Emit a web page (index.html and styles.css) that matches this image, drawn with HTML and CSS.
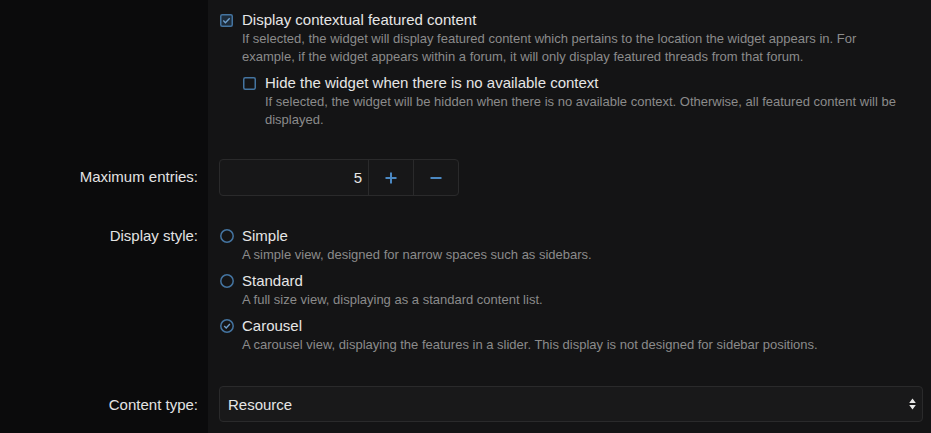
FILE: index.html
```html
<!DOCTYPE html>
<html lang="en">
<head>
  <meta charset="UTF-8" />
  <meta name="viewport" content="width=device-width, initial-scale=1.0" />
  <title>Widget options</title>
  <link rel="stylesheet" href="styles.css">
</head>
<body>
  <div class="form">
    <div class="row row-first">
      <div class="label"></div>
      <div class="field">
        <div class="choice">
          <svg class="box" width="13" height="13" viewBox="0 0 13 13">
            <rect x="0.75" y="0.75" width="11.5" height="11.5" rx="1.5" fill="#1d2c3b" stroke="#4474a0" stroke-width="1.5"/>
            <path d="M3.3 6.6 L5.4 8.7 L9.7 4.2" fill="none" stroke="#6f9fcc" stroke-width="1.4"/>
          </svg>
          <div class="choice-text">
            <div class="choice-title">Display contextual featured content</div>
            <div class="hint">If selected, the widget will display featured content which pertains to the location the widget appears in. For example, if the widget appears within a forum, it will only display featured threads from that forum.</div>
            <div class="choice nested">
              <svg class="box" width="13" height="13" viewBox="0 0 13 13">
                <rect x="0.75" y="0.75" width="11.5" height="11.5" rx="1.5" fill="none" stroke="#4474a0" stroke-width="1.5"/>
              </svg>
              <div class="choice-text">
                <div class="choice-title">Hide the widget when there is no available context</div>
                <div class="hint">If selected, the widget will be hidden when there is no available context. Otherwise, all featured content will be displayed.</div>
              </div>
            </div>
          </div>
        </div>
      </div>
    </div>

    <div class="row">
      <div class="label label-input">Maximum entries:</div>
      <div class="field">
        <div class="number">
          <div class="number-value">5</div>
          <div class="number-btn">
            <svg width="12" height="12" viewBox="0 0 12 12"><path d="M6 0.5 V11.5 M0.5 6 H11.5" stroke="#4b88c2" stroke-width="2"/></svg>
          </div>
          <div class="number-btn">
            <svg width="12" height="12" viewBox="0 0 12 12"><path d="M0.5 6 H11.5" stroke="#4b88c2" stroke-width="2"/></svg>
          </div>
        </div>
      </div>
    </div>

    <div class="row row-radios">
      <div class="label label-choice">Display style:</div>
      <div class="field">
        <div class="choice radio-item">
          <svg class="box radio" width="14" height="14" viewBox="0 0 14 14">
            <circle cx="7" cy="7" r="6.2" fill="none" stroke="#4474a0" stroke-width="1.5"/>
          </svg>
          <div class="choice-text">
            <div class="choice-title">Simple</div>
            <div class="hint">A simple view, designed for narrow spaces such as sidebars.</div>
          </div>
        </div>
        <div class="choice radio-item">
          <svg class="box radio" width="14" height="14" viewBox="0 0 14 14">
            <circle cx="7" cy="7" r="6.2" fill="none" stroke="#4474a0" stroke-width="1.5"/>
          </svg>
          <div class="choice-text">
            <div class="choice-title">Standard</div>
            <div class="hint">A full size view, displaying as a standard content list.</div>
          </div>
        </div>
        <div class="choice radio-item">
          <svg class="box radio" width="14" height="14" viewBox="0 0 14 14">
            <circle cx="7" cy="7" r="6.2" fill="none" stroke="#4474a0" stroke-width="1.5"/>
            <path d="M4.2 7.1 L6.2 9 L9.9 5.1" fill="none" stroke="#6f9fcc" stroke-width="1.4"/>
          </svg>
          <div class="choice-text">
            <div class="choice-title">Carousel</div>
            <div class="hint">A carousel view, displaying the features in a slider. This display is not designed for sidebar positions.</div>
          </div>
        </div>
      </div>
    </div>

    <div class="row">
      <div class="label label-select">Content type:</div>
      <div class="field">
        <div class="select">
          <span>Resource</span>
          <svg width="7" height="12" viewBox="0 0 7 12"><path d="M3.5 0.5 L6.8 5 H0.2 Z M3.5 11.5 L6.8 7 H0.2 Z" fill="#e8e8e8"/></svg>
        </div>
      </div>
    </div>
  </div>
</body>
</html>
```

FILE: styles.css
```css
body {
  margin: 0;
  background: #0b0b0c;
  font-family: "Liberation Sans", Arial, sans-serif;
  color: #e3e3e3;
}
.form {
  display: flex;
  flex-direction: column;
}
.row {
  display: grid;
  grid-template-columns: 208px 1fr;
}
.label {
  text-align: right;
  padding: 15px 10px 0 0;
  font-size: 15px;
  line-height: 18px;
  color: #e3e3e3;
}
.label-input {
  padding-top: 24px;
}
.label-choice {
  padding-top: 16px;
}
.label-select {
  padding-top: 25px;
}
.field {
  background: #141415;
  padding: 15px 8px 15px 11px;
}
.row-first .field {
  padding-top: 11px;
}
.row-radios .field {
  padding-top: 16px;
  padding-bottom: 17px;
}
.choice {
  display: flex;
  align-items: flex-start;
}
.choice-text {
  padding-right: 12px;
}
.nested .choice-text {
  padding-right: 0;
}
.box {
  flex: none;
  margin: 3px 9px 0 1px;
}
.radio {
  margin: 2px 8px 0 1px;
}
.choice-title {
  font-size: 15px;
  line-height: 18px;
  color: #e6e6e6;
}
.hint {
  margin-top: 1px;
  font-size: 13px;
  line-height: 18px;
  color: #8b8b8b;
}
.nested {
  margin-top: 8px;
}
.radio-item + .radio-item {
  margin-top: 8px;
}
.number {
  display: flex;
  width: 240px;
  height: 37px;
  box-sizing: border-box;
  background: #171718;
  border: 1px solid #2a2a2b;
  border-radius: 4px;
}
.number-value {
  flex: 1;
  text-align: right;
  padding-right: 6px;
  font-size: 15px;
  line-height: 35px;
  color: #e6e6e6;
}
.number-btn {
  width: 44px;
  display: flex;
  align-items: center;
  justify-content: center;
  border-left: 1px solid #2a2a2b;
}
.select {
  display: flex;
  align-items: center;
  justify-content: space-between;
  height: 36px;
  box-sizing: border-box;
  padding: 0 6px 0 8px;
  background: #19191a;
  border: 1px solid #2a2a2b;
  border-radius: 4px;
  font-size: 15px;
  color: #e6e6e6;
}
```
